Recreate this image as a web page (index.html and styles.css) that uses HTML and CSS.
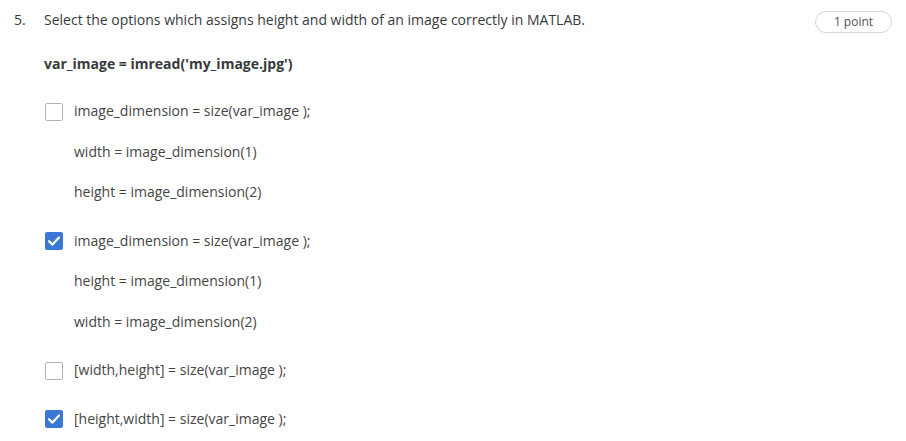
FILE: index.html
```html
<!DOCTYPE html>
<html>
<head>
<meta charset="utf-8">
<link rel="stylesheet" href="styles.css">
</head>
<body>
<div class="question">
  <div class="header">
    <span class="num">5.</span>
    <span class="prompt">Select the options which assigns height and width of an image correctly in MATLAB.</span>
    <span class="badge">1 point</span>
  </div>
  <div class="code">var_image = imread('my_image.jpg')</div>
  <div class="options">
    <div class="option">
      <span class="box"></span>
      <div class="lines">
        <p>image_dimension = size(var_image );</p>
        <p>width = image_dimension(1)</p>
        <p>height = image_dimension(2)</p>
      </div>
    </div>
    <div class="option">
      <span class="box checked"><svg viewBox="0 0 18 18" width="18" height="18"><path d="M4 9.2 L7.5 12.6 L14 5.6" fill="none" stroke="#fff" stroke-width="2.2" stroke-linecap="round" stroke-linejoin="round"/></svg></span>
      <div class="lines">
        <p>image_dimension = size(var_image );</p>
        <p>height = image_dimension(1)</p>
        <p>width = image_dimension(2)</p>
      </div>
    </div>
    <div class="option">
      <span class="box"></span>
      <div class="lines">
        <p>[width,height] = size(var_image );</p>
      </div>
    </div>
    <div class="option">
      <span class="box checked"><svg viewBox="0 0 18 18" width="18" height="18"><path d="M4 9.2 L7.5 12.6 L14 5.6" fill="none" stroke="#fff" stroke-width="2.2" stroke-linecap="round" stroke-linejoin="round"/></svg></span>
      <div class="lines">
        <p>[height,width] = size(var_image );</p>
      </div>
    </div>
  </div>
</div>
</body>
</html>
```
FILE: styles.css
```css
html, body {
  margin: 0;
  padding: 0;
  background: #fff;
}
body {
  font-family: "Open Sans", "Liberation Sans", sans-serif;
  font-size: 14px;
  line-height: 20px;
  color: #373a3c;
}
.question {
  padding: 10px 14px 0 14px;
}
.header {
  display: flex;
  align-items: flex-start;
}
.num {
  width: 30px;
  flex: none;
}
.prompt {
  flex: 1;
}
.badge {
  flex: none;
  margin-top: 1px;
  width: 75px;
  height: 20px;
  border: 1px solid #d6d6d6;
  border-radius: 11px;
  font-size: 12px;
  line-height: 20px;
  text-align: center;
  color: #555;
}
.code {
  margin: 21px 0 0 30px;
  font-weight: 700;
  color: #373a3c;
}
.options {
  margin: 27px 0 0 31px;
  display: flex;
  flex-direction: column;
  gap: 28.5px;
}
.option {
  display: flex;
  align-items: flex-start;
  gap: 11px;
}
.box {
  flex: none;
  box-sizing: border-box;
  width: 18px;
  height: 18px;
  margin-top: 1.5px;
  border: 1.5px solid #b4b4b4;
  border-radius: 2px;
  background: #fff;
  display: flex;
}
.box.checked {
  border: none;
  background: #3b77d4;
}
.lines {
  display: flex;
  flex-direction: column;
  gap: 20.5px;
}
.lines p {
  margin: 0;
  color: #454545;
}
```
